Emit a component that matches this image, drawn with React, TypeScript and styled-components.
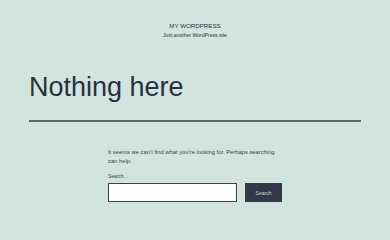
import styled, { createGlobalStyle } from 'styled-components';

const GlobalStyle = createGlobalStyle`
  html, body {
    margin: 0;
    padding: 0;
    background: #d1e4dd;
  }
  body {
    width: 390px;
    height: 240px;
    overflow: hidden;
    font-family: "Liberation Sans", Arial, sans-serif;
    color: #28303d;
  }
`;

const Page = styled.div`
  display: flex;
  flex-direction: column;
`;

const Header = styled.header`
  display: flex;
  flex-direction: column;
  align-items: center;
  padding-top: 22px;
  gap: 3px;
`;

const SiteTitle = styled.div`
  font-size: 6.2px;
  line-height: 7px;
  text-transform: uppercase;
`;

const Tagline = styled.div`
  font-size: 5.1px;
  line-height: 6px;
`;

const Main = styled.main`
  display: flex;
  flex-direction: column;
  padding: 0 29px;
  margin-top: 36px;
`;

const Title = styled.h1`
  margin: 0;
  font-size: 27px;
  line-height: 26px;
  font-weight: 400;
`;

const Rule = styled.hr`
  margin: 20px 0 0;
  border: 0;
  height: 2px;
  background: #5b6670;
`;

const Content = styled.div`
  display: flex;
  flex-direction: column;
  width: 175px;
  margin: 26px 0 0 79px;
`;

const Text = styled.p`
  margin: 0;
  font-size: 5.8px;
  line-height: 9px;
  color: #39414d;
`;

const Label = styled.label`
  margin-top: 7px;
  font-size: 5px;
  line-height: 7px;
  color: #39414d;
`;

const SearchRow = styled.form`
  display: flex;
  gap: 8px;
  margin-top: 3px;
`;

const Input = styled.input`
  box-sizing: border-box;
  width: 129px;
  height: 19px;
  margin: 0;
  border: 1.5px solid #39414d;
  background: #fff;
  outline: none;
`;

const Button = styled.button`
  box-sizing: border-box;
  width: 37px;
  height: 19px;
  margin: 0;
  border: 0;
  padding: 0;
  background: #313946;
  color: #c9d6d2;
  font-family: "Liberation Sans", Arial, sans-serif;
  font-size: 5px;
`;

export default function App() {
  return (
    <Page>
      <GlobalStyle />
      <Header>
        <SiteTitle>My WordPress</SiteTitle>
        <Tagline>Just another WordPress site</Tagline>
      </Header>
      <Main>
        <Title>Nothing here</Title>
        <Rule />
        <Content>
          <Text>
            It seems we can&rsquo;t find what you&rsquo;re looking for. Perhaps searching can help.
          </Text>
          <Label>Search…</Label>
          <SearchRow onSubmit={(e) => e.preventDefault()}>
            <Input type="search" />
            <Button type="submit">Search</Button>
          </SearchRow>
        </Content>
      </Main>
    </Page>
  );
}
